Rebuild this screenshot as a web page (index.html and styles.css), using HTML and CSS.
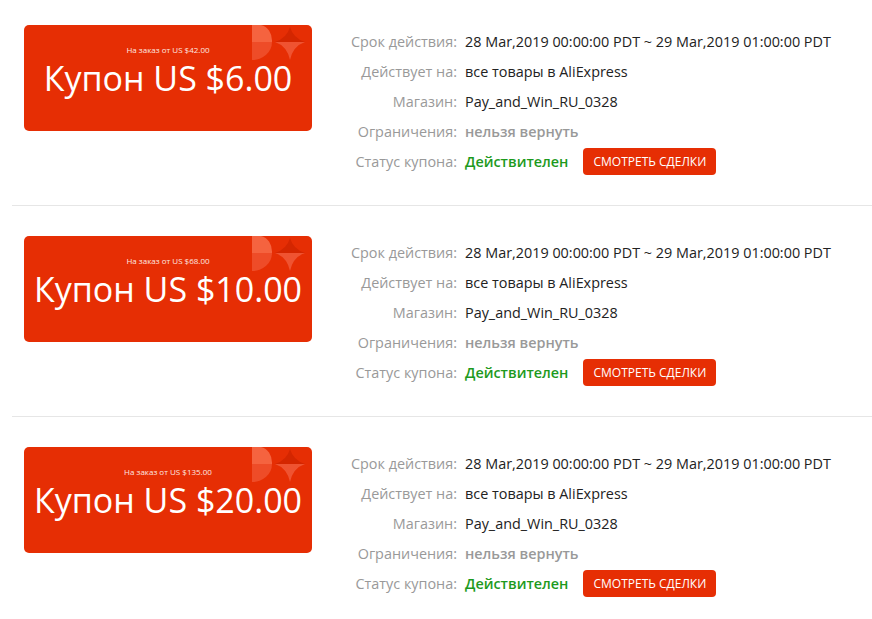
FILE: index.html
```html
<!DOCTYPE html>
<html lang="ru">
<head>
<meta charset="utf-8">
<link rel="stylesheet" href="styles.css">
</head>
<body>
<div class="list">
  <div class="row">
    <div class="coupon">
      <svg class="deco" width="60" height="40" viewBox="0 0 60 40">
        <path d="M0 0 H9 A13 16 0 0 1 20 17 H0 Z" fill="#f5633f"/>
        <path d="M0 17 H20 A20 18 0 0 1 0 35 Z" fill="#ee4c28"/>
        <path d="M38 2 Q41 13 53 17 H23 Q35 13 38 2 Z" fill="#d42600"/>
        <path d="M23 17 H53 Q41 21 38 35 Q35 21 23 17 Z" fill="#ef5331"/>
      </svg>
      <div class="min">На заказ от US $42.00</div>
      <div class="amount">Купон US $6.00</div>
    </div>
    <div class="info">
      <div class="label">Срок действия:</div><div class="value">28 Mar,2019 00:00:00 PDT ~ 29 Mar,2019 01:00:00 PDT</div>
      <div class="label">Действует на:</div><div class="value">все товары в AliExpress</div>
      <div class="label">Магазин:</div><div class="value">Pay_and_Win_RU_0328</div>
      <div class="label">Ограничения:</div><div class="value muted">нельзя вернуть</div>
      <div class="label">Статус купона:</div><div class="value status"><span class="valid">Действителен</span><span class="btn">СМОТРЕТЬ СДЕЛКИ</span></div>
    </div>
  </div>
  <div class="row">
    <div class="coupon">
      <svg class="deco" width="60" height="40" viewBox="0 0 60 40">
        <path d="M0 0 H9 A13 16 0 0 1 20 17 H0 Z" fill="#f5633f"/>
        <path d="M0 17 H20 A20 18 0 0 1 0 35 Z" fill="#ee4c28"/>
        <path d="M38 2 Q41 13 53 17 H23 Q35 13 38 2 Z" fill="#d42600"/>
        <path d="M23 17 H53 Q41 21 38 35 Q35 21 23 17 Z" fill="#ef5331"/>
      </svg>
      <div class="min">На заказ от US $68.00</div>
      <div class="amount">Купон US $10.00</div>
    </div>
    <div class="info">
      <div class="label">Срок действия:</div><div class="value">28 Mar,2019 00:00:00 PDT ~ 29 Mar,2019 01:00:00 PDT</div>
      <div class="label">Действует на:</div><div class="value">все товары в AliExpress</div>
      <div class="label">Магазин:</div><div class="value">Pay_and_Win_RU_0328</div>
      <div class="label">Ограничения:</div><div class="value muted">нельзя вернуть</div>
      <div class="label">Статус купона:</div><div class="value status"><span class="valid">Действителен</span><span class="btn">СМОТРЕТЬ СДЕЛКИ</span></div>
    </div>
  </div>
  <div class="row">
    <div class="coupon">
      <svg class="deco" width="60" height="40" viewBox="0 0 60 40">
        <path d="M0 0 H9 A13 16 0 0 1 20 17 H0 Z" fill="#f5633f"/>
        <path d="M0 17 H20 A20 18 0 0 1 0 35 Z" fill="#ee4c28"/>
        <path d="M38 2 Q41 13 53 17 H23 Q35 13 38 2 Z" fill="#d42600"/>
        <path d="M23 17 H53 Q41 21 38 35 Q35 21 23 17 Z" fill="#ef5331"/>
      </svg>
      <div class="min">На заказ от US $135.00</div>
      <div class="amount">Купон US $20.00</div>
    </div>
    <div class="info">
      <div class="label">Срок действия:</div><div class="value">28 Mar,2019 00:00:00 PDT ~ 29 Mar,2019 01:00:00 PDT</div>
      <div class="label">Действует на:</div><div class="value">все товары в AliExpress</div>
      <div class="label">Магазин:</div><div class="value">Pay_and_Win_RU_0328</div>
      <div class="label">Ограничения:</div><div class="value muted">нельзя вернуть</div>
      <div class="label">Статус купона:</div><div class="value status"><span class="valid">Действителен</span><span class="btn">СМОТРЕТЬ СДЕЛКИ</span></div>
    </div>
  </div>
</div>
</body>
</html>
```

FILE: styles.css
```css
* { box-sizing: border-box; }
html, body { margin: 0; padding: 0; background: #fff; }
body {
  font-family: "Open Sans", "Noto Sans", sans-serif;
  font-size: 14.4px;
  color: #222;
  overflow: hidden;
}
.list { padding-left: 12px; }
.row {
  display: flex;
  align-items: flex-start;
  padding: 30px 0 29px 12px;
  border-bottom: 1px solid #e6e6e6;
}
.row:first-child { padding-top: 25px; }
.row:last-child { border-bottom: none; }
.coupon {
  position: relative;
  width: 288px;
  height: 106px;
  flex: none;
  background: #e62e04;
  border-radius: 5px;
  color: #fff;
  text-align: center;
  padding-top: 19px;
  overflow: hidden;
}
.deco { position: absolute; left: 228px; top: 0; }
.min {
  position: relative;
  font-size: 8px;
  line-height: 12px;
  color: #fde8e0;
}
.amount {
  position: relative;
  font-size: 34px;
  line-height: 44px;
  white-space: nowrap;
}
.info {
  display: grid;
  grid-template-columns: 110px auto;
  column-gap: 8px;
  grid-auto-rows: 30px;
  margin-left: 35px;
  margin-top: 1px;
  align-items: center;
}
.label { text-align: right; color: #999; white-space: nowrap; }
.value { color: #222; white-space: nowrap; }
.muted { color: #999; font-weight: 600; }
.status { display: flex; align-items: center; }
.valid { color: #1d9a1d; font-weight: 600; }
.btn {
  margin-left: 15px;
  background: #e62e04;
  color: #fff;
  font-size: 12px;
  line-height: 27px;
  height: 27px;
  padding: 0 10px;
  border-radius: 4px;
}
```
